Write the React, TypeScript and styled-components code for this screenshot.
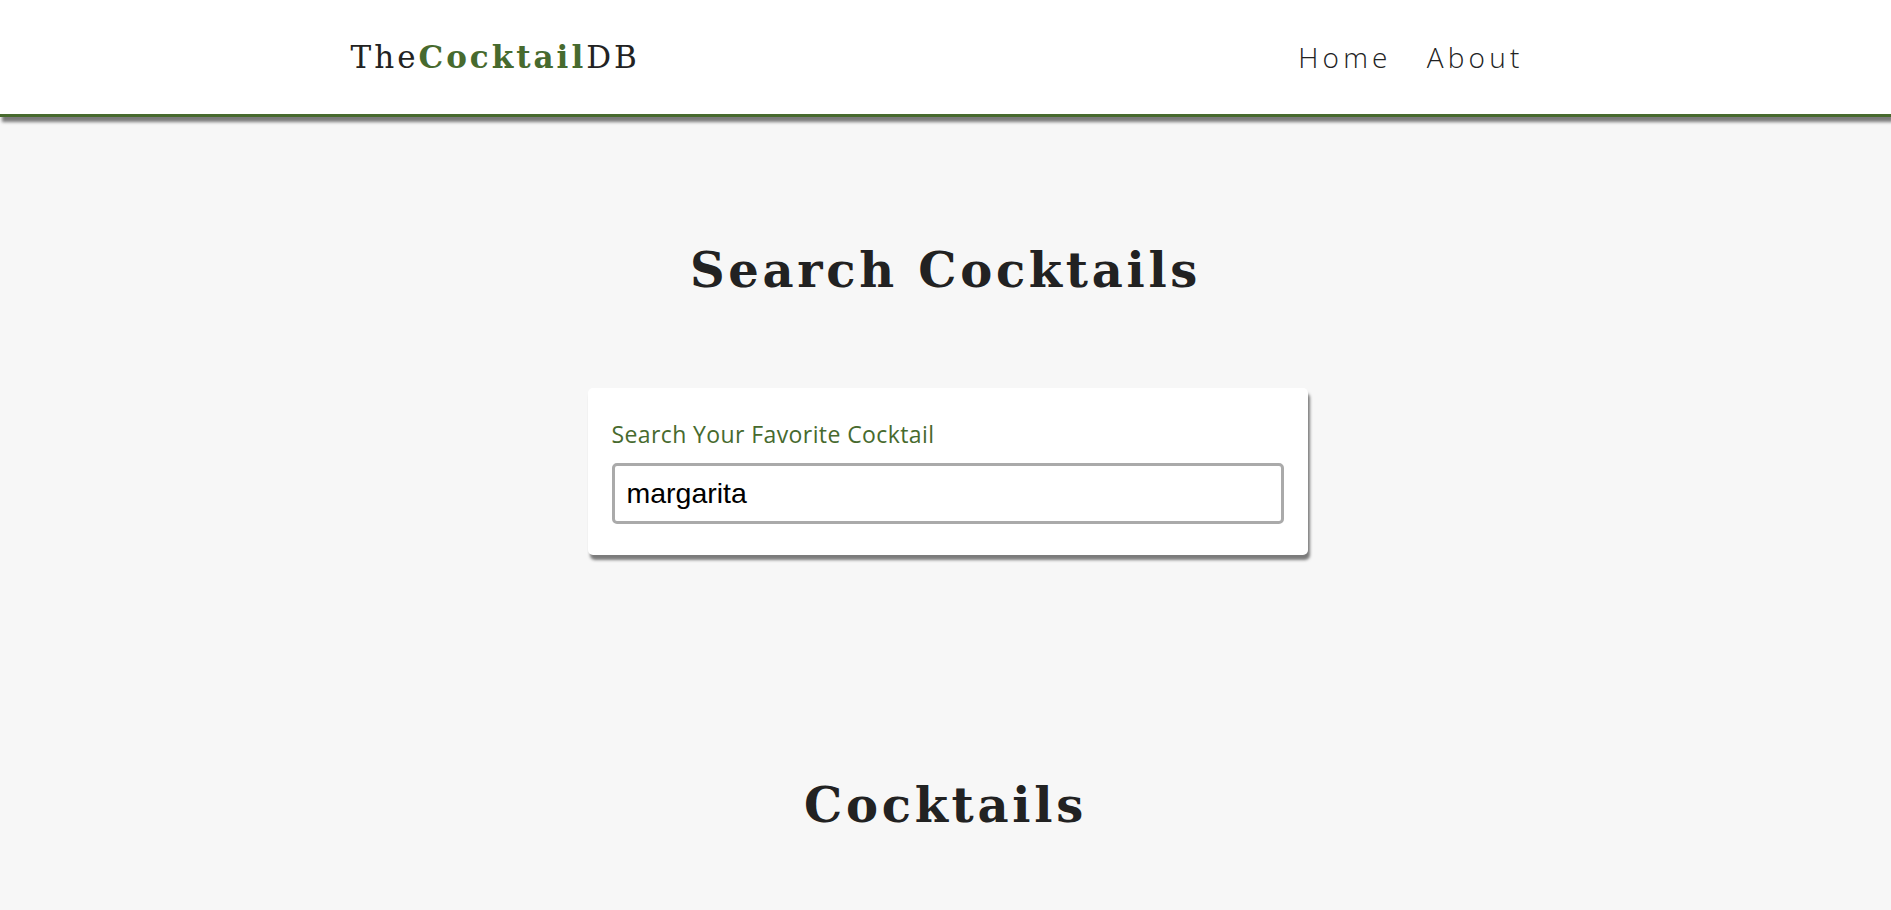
import React, { useState } from "react";
import styled, { createGlobalStyle } from "styled-components";

const GlobalStyle = createGlobalStyle`
  *, *::before, *::after { box-sizing: border-box; }
  html, body { margin: 0; padding: 0; }
  body {
    background: #f7f7f7;
    color: #222;
    font-family: "Open Sans", "Noto Sans", sans-serif;
  }
`;

const green = "#476a2e";
const lightShadow = "2px 5px 3px 0 rgba(0, 0, 0, 0.5)";

const Navbar = styled.nav`
  height: 117px;
  background: #fff;
  border-bottom: 3px solid ${green};
  box-shadow: ${lightShadow};
  display: flex;
  align-items: center;
  position: relative;
  z-index: 1;
`;

const NavCenter = styled.div`
  width: 1190px;
  margin: 0 auto;
  display: flex;
  align-items: center;
  justify-content: space-between;
`;

const Logo = styled.a`
  font-family: "DejaVu Serif", "Liberation Serif", serif;
  font-size: 31px;
  letter-spacing: 3px;
  color: #222;
  text-decoration: none;
  line-height: 1.164;
`;

const LogoAccent = styled.span`
  color: ${green};
  font-weight: 700;
`;

const NavLinks = styled.ul`
  list-style: none;
  margin: 0 9px 0 0;
  padding: 0;
  display: flex;
  gap: 19px;
`;

const NavLink = styled.a`
  display: block;
  padding: 0 8px;
  font-family: "Open Sans", sans-serif;
  font-weight: 350;
  font-size: 28px;
  letter-spacing: 4.2px;
  color: #222;
  text-decoration: none;
`;

const Section = styled.section<{ $top: number }>`
  padding-top: ${(p) => p.$top}px;
  display: flex;
  flex-direction: column;
  align-items: center;
`;

const SectionTitle = styled.h2`
  margin: 0;
  font-family: "DejaVu Serif", "Liberation Serif", serif;
  font-weight: 700;
  font-size: 48px;
  line-height: 58px;
  letter-spacing: 3.7px;
  color: #222;
  text-align: center;
`;

const SearchForm = styled.form`
  width: 720px;
  margin: 89px 0 0 4px;
  padding: 30px 24px 31px;
  background: #fff;
  border-radius: 5px;
  box-shadow: ${lightShadow};
`;

const Label = styled.label`
  display: block;
  font-family: "Open Sans", sans-serif;
  font-size: 23px;
  line-height: 33px;
  letter-spacing: 0.4px;
  color: ${green};
  margin-bottom: 12px;
`;

const Input = styled.input`
  display: block;
  width: 100%;
  height: 61px;
  padding: 0 12px;
  border: 3px solid #aaaaaa;
  border-radius: 5px;
  background: #fff;
  font-family: "Liberation Sans", Arial, sans-serif;
  font-size: 28.5px;
  color: #000;
  outline: none;
`;

export default function App() {
  const [term, setTerm] = useState("margarita");
  return (
    <>
      <GlobalStyle />
      <Navbar>
        <NavCenter>
          <Logo href="#">
            The<LogoAccent>Cocktail</LogoAccent>DB
          </Logo>
          <NavLinks>
            <li>
              <NavLink href="#">Home</NavLink>
            </li>
            <li>
              <NavLink href="#">About</NavLink>
            </li>
          </NavLinks>
        </NavCenter>
      </Navbar>
      <Section $top={124}>
        <SectionTitle>Search Cocktails</SectionTitle>
        <SearchForm onSubmit={(e) => e.preventDefault()}>
          <Label htmlFor="name">Search Your Favorite Cocktail</Label>
          <Input
            id="name"
            type="text"
            value={term}
            onChange={(e) => setTerm(e.target.value)}
          />
        </SearchForm>
      </Section>
      <Section $top={221}>
        <SectionTitle>Cocktails</SectionTitle>
      </Section>
    </>
  );
}
